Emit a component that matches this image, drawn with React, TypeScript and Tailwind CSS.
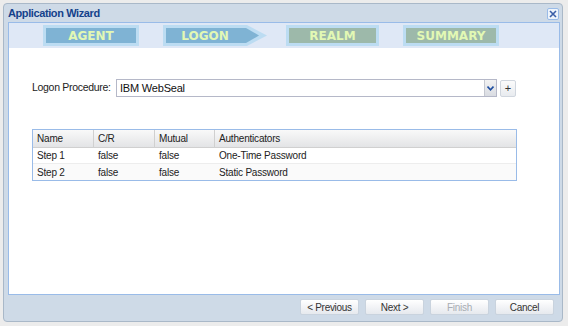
import React from 'react'

const font = { fontFamily: '"Liberation Sans", Arial, sans-serif' }
const stepFont = { fontFamily: '"DejaVu Sans", Verdana, sans-serif' }

const rows = [
  { name: 'Step 1', cr: 'false', mutual: 'false', auth: 'One-Time Password' },
  { name: 'Step 2', cr: 'false', mutual: 'false', auth: 'Static Password' },
]

function StepBox({ label, done }: { label: string; done?: boolean }) {
  return (
    <div className="h-[21px] border-[3px] border-[#bcdcf2] bg-[#bcdcf2]">
      <div
        className={
          'h-full flex items-center justify-center text-[12px] font-bold text-[#e2f8b4] ' +
          (done ? 'bg-[#7fb3d4]' : 'bg-[#9db9aa]')
        }
        style={stepFont}
      >
        {label}
      </div>
    </div>
  )
}

function ArrowStep({ label }: { label: string }) {
  return (
    <div className="relative w-[105px] h-[21px]">
      <svg width="105" height="21" className="absolute inset-0">
        <polygon points="0,0 84,0 104,10.5 84,21 0,21" fill="#bcdcf2" />
        <polygon points="3,3 83,3 96,10.5 83,18 3,18" fill="#7fb3d4" />
      </svg>
      <div
        className="relative w-[84px] h-full flex items-center justify-center text-[12px] font-bold text-[#e2f8b4]"
        style={stepFont}
      >
        {label}
      </div>
    </div>
  )
}

function Button({ children, disabled }: { children: React.ReactNode; disabled?: boolean }) {
  return (
    <div
      className={
        'w-[59px] h-[16px] flex items-center justify-center rounded-[2px] border border-[#c9d3de] bg-gradient-to-b from-[#ffffff] to-[#e6e9ee] text-[10px] tracking-[-0.3px] ' +
        (disabled ? 'text-[#a8adb3]' : 'text-[#333]')
      }
    >
      {children}
    </div>
  )
}

export default function App() {
  return (
    <div className="w-[568px] h-[326px] bg-[#ececec] pt-[3px] pl-[3px]" style={font}>
      <div className="w-[560px] h-[319px] flex flex-col rounded-[4px] border border-[#a9b8c8] bg-[#cedae7]">
        <div className="h-[18px] flex items-center justify-between pl-[4px] pr-[3px]">
          <span className="text-[11px] font-bold tracking-[-0.4px] text-[#15428b]">Application Wizard</span>
          <div className="w-[12px] h-[12px] mt-[2px] rounded-[2px] border border-[#99bbe8] bg-[#eef4fb] flex items-center justify-center">
            <svg width="8" height="8" viewBox="0 0 8 8">
              <path d="M1 1 L7 7 M7 1 L1 7" stroke="#3b5fa8" strokeWidth="1.6" />
            </svg>
          </div>
        </div>
        <div className="ml-[4px] mr-[2px] h-[273px] border border-[#99bbe8] bg-white flex flex-col">
          <div className="h-[25px] bg-[#dfe8f6] flex items-center pl-[34px]">
            <div className="w-[96px]">
              <StepBox label="AGENT" done />
            </div>
            <div className="ml-[24px]">
              <ArrowStep label="LOGON" />
            </div>
            <div className="ml-[18px] w-[93px]">
              <StepBox label="REALM" />
            </div>
            <div className="ml-[24px] w-[96px]">
              <StepBox label="SUMMARY" />
            </div>
          </div>
          <div className="flex items-center mt-[31px] pl-[23px] text-[11px] text-[#222]">
            <span className="w-[84px] whitespace-nowrap text-[10.5px] tracking-[-0.3px]">Logon Procedure:</span>
            <div className="w-[381px] h-[18px] flex border border-[#b5b8c8] bg-white">
              <div className="flex-1 flex items-center pl-[3px] text-[11px] tracking-[-0.2px] text-[#111]">IBM WebSeal</div>
              <div className="w-[12px] h-full border-l border-[#c5c8d0] bg-gradient-to-b from-[#f2f2f2] to-[#d9dce2] flex items-center justify-center">
                <svg width="7" height="5" viewBox="0 0 7 5">
                  <path d="M0.5 0.5 L3.5 3.8 L6.5 0.5" fill="none" stroke="#1f4ea0" strokeWidth="1.6" />
                </svg>
              </div>
            </div>
            <div className="ml-[3px] w-[16px] h-[17px] rounded-[2px] border border-[#d0d6de] bg-gradient-to-b from-[#fbfbfb] to-[#e8ebef] flex items-center justify-center text-[11px] text-[#333]">
              +
            </div>
          </div>
          <div className="mt-[32px] ml-[23px] w-[485px] border border-[#99bbe8] text-[10px] tracking-[-0.2px] text-[#222]">
            <div className="h-[18px] flex bg-gradient-to-b from-[#f9f9f9] to-[#e3e4e6] border-b border-[#d0d0d0]">
              <div className="w-[61px] pl-[4px] flex items-center border-r border-[#d0d0d0]">Name</div>
              <div className="w-[61px] pl-[4px] flex items-center border-r border-[#d0d0d0]">C/R</div>
              <div className="w-[60px] pl-[4px] flex items-center border-r border-[#d0d0d0]">Mutual</div>
              <div className="flex-1 pl-[4px] flex items-center">Authenticators</div>
            </div>
            {rows.map((r, i) => (
              <div
                key={r.name}
                className={
                  'h-[16px] flex items-center ' +
                  (i === 0 ? 'bg-white border-b border-[#ededed]' : 'bg-[#fafafa]')
                }
              >
                <div className="w-[61px] pl-[4px]">{r.name}</div>
                <div className="w-[61px] pl-[4px]">{r.cr}</div>
                <div className="w-[60px] pl-[4px]">{r.mutual}</div>
                <div className="flex-1 pl-[4px]">{r.auth}</div>
              </div>
            ))}
          </div>
        </div>
        <div className="flex-1 flex items-center justify-end gap-[6px] pr-[8px] pb-[2px]">
          <Button>&lt; Previous</Button>
          <Button>Next &gt;</Button>
          <Button disabled>Finish</Button>
          <Button>Cancel</Button>
        </div>
      </div>
    </div>
  )
}
